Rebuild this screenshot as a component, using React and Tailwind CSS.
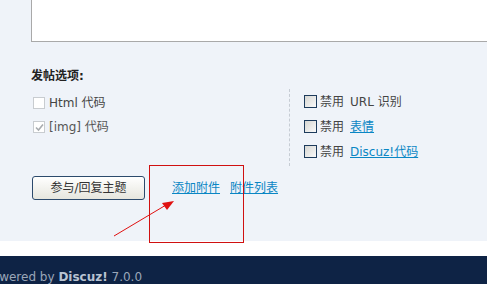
import React from "react";

const FONT = { fontFamily: '"DejaVu Sans", "Noto Sans CJK SC", sans-serif' };

function PlainBox({ checked }) {
    return (
        <span className="w-[12px] h-[12px] border border-[#c8ccd0] bg-white flex items-center justify-center shrink-0">
            {checked && (
                <svg width="9" height="9" viewBox="0 0 9 9">
                    <path d="M1 4.5 L3.5 7 L8 1.5" fill="none" stroke="#a8acb0" strokeWidth="1.6" />
                </svg>
            )}
        </span>
    );
}

function XpBox() {
    return <span className="w-[13px] h-[13px] border border-[#1d3b5c] bg-gradient-to-br from-[#d6d6d2] to-[#fafafa] shrink-0" />;
}

export default function App() {
    return (
        <div className="w-[487px] h-[284px] overflow-hidden relative bg-white text-[12px]" style={FONT}>
            <div className="h-[241px] bg-[#eff3f9] pl-[31px]">
                {/* textarea bottom */}
                <div className="h-[42px] bg-white border-l border-b border-[#a9a9a9]" />

                <div className="mt-[26px] leading-[16px] font-bold text-[#222]">发帖选项:</div>

                {/* options */}
                <div className="flex mt-[5px] text-[#444]">
                    <div className="w-[258px] pt-[2px]">
                        <label className="h-[24px] flex items-center gap-[4px] pl-[2px]">
                            <PlainBox />
                            <span>Html 代码</span>
                        </label>
                        <label className="h-[24px] flex items-center gap-[4px] pl-[2px] text-[#555]">
                            <PlainBox checked />
                            <span>[img] 代码</span>
                        </label>
                    </div>
                    <div className="border-l border-dashed border-[#c6ccd4] pl-[14px] pb-[2px]">
                        <label className="h-[25px] flex items-center">
                            <XpBox />
                            <span className="ml-[3px]">禁用</span>
                            <span className="ml-[6px]">URL 识别</span>
                        </label>
                        <label className="h-[25px] flex items-center">
                            <XpBox />
                            <span className="ml-[3px]">禁用</span>
                            <a href="#" className="ml-[6px] text-[#0a86c4] underline">表情</a>
                        </label>
                        <label className="h-[25px] flex items-center">
                            <XpBox />
                            <span className="ml-[3px]">禁用</span>
                            <a href="#" className="ml-[6px] text-[#0a86c4] underline">Discuz!代码</a>
                        </label>
                    </div>
                </div>

                {/* actions */}
                <div className="flex items-center mt-[10px] pl-[1px]">
                    <button className="w-[113px] h-[24px] border border-[#2c4a6c] rounded-[3px] bg-gradient-to-b from-white to-[#e6e6de] text-[#333] leading-none">
                        参与/回复主题
                    </button>
                    <a href="#" className="ml-[27px] text-[#0a86c4] underline">添加附件</a>
                    <a href="#" className="ml-[10px] text-[#0a86c4] underline">附件列表</a>
                </div>
            </div>

            <div className="h-[15px] bg-white" />

            {/* footer */}
            <div className="h-[28px] bg-[#0e2345] pt-[14px] leading-[14px] text-[#9aa6b8] whitespace-nowrap">
                <span className="ml-[-15px]">Powered by <b className="text-[#b9c3d2]">Discuz!</b> 7.0.0</span>
            </div>

            {/* annotation */}
            <div className="absolute left-[149px] top-[165px] w-[95px] h-[78px] border border-[#d01010]" />
            <svg className="absolute left-0 top-0" width="487" height="284">
                <line x1="114" y1="236" x2="166" y2="205" stroke="#e01010" strokeWidth="1" />
                <polygon points="174,201 162,203 167,210" fill="#e01010" />
            </svg>
        </div>
    );
}
